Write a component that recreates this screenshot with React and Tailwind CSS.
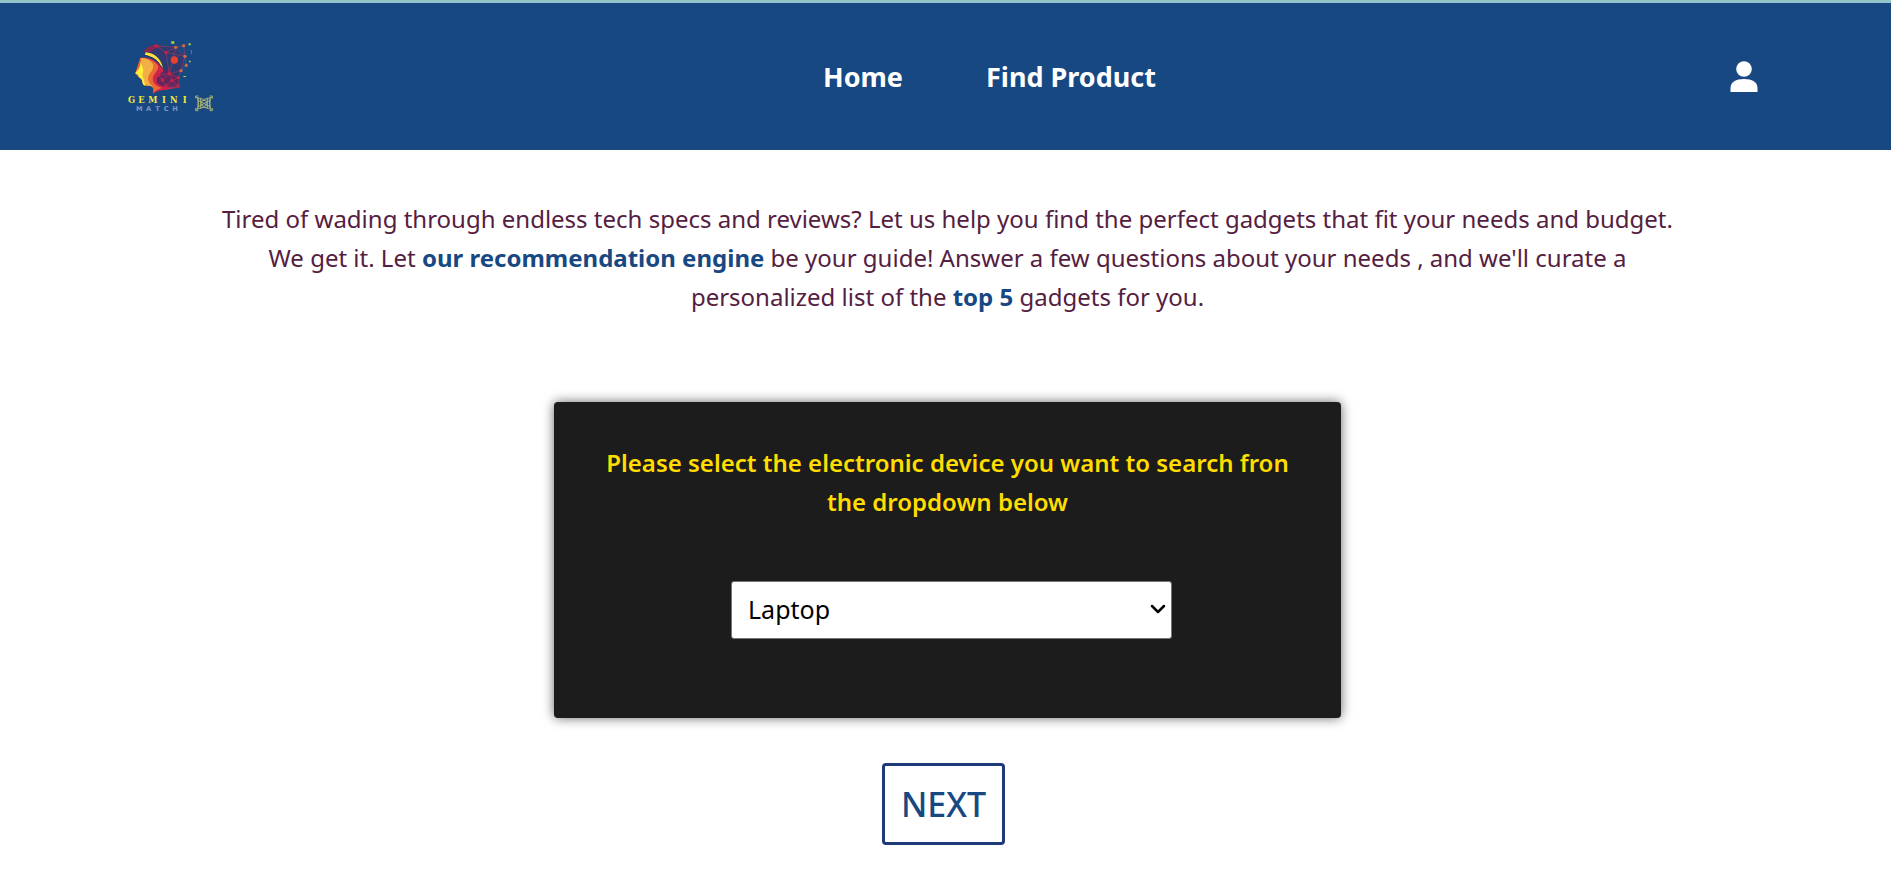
import React, { useState } from 'react';
import { ChevronDown } from 'lucide-react';

const links = [
  { label: 'Home', href: '#home' },
  { label: 'Find Product', href: '#find-product' },
];

const devices = ['Laptop', 'Phone', 'Tablet', 'Smart Watch'];

// Nodes and edges of the network at the back of the head
const nodes = [
  [138, 47], [168, 67], [197, 52], [221, 47], [225, 79], [229, 106], [213, 122],
  [178, 131], [157, 150], [205, 143], [186, 152], [205, 168], [168, 168], [145, 135],
];
const edges = [
  [0, 1], [1, 2], [2, 3], [2, 4], [3, 4], [4, 5], [5, 6], [6, 9], [7, 9], [7, 8],
  [7, 10], [9, 11], [10, 11], [10, 12], [8, 12], [8, 13], [7, 13], [1, 7], [2, 7],
  [4, 6], [6, 7], [0, 2], [1, 4], [9, 10], [11, 12],
];

function Logo() {
  return (
    <svg viewBox="51 30 264 219" className="h-[73px] w-[88px]" role="img" aria-label="Gemini Match">
      {/* Back of the head */}
      <path d="M138 47 L166 46 L197 52 L225 79 L213 122 L205 143 L207 170 L150 170 L137 145 L160 118 L140 85 L100 65Z" fill="#5c2257" opacity="0.35" />
      <path d="M100 65 C109 52 123 44 143 45 L156 50 C145 52 130 55 124 66Z" fill="#a01f4c" opacity="0.8" />
      <path d="M158 122 L178 120 L203 141 L207 170 L150 170 C137 160 138 140 158 122Z" fill="#7a1c55" opacity="0.7" />
      {/* Face, from the crimson band to the yellow profile */}
      <path d="M91 84 C104 80 130 86 146 101 C156 110 164 120 158 126 C144 134 137 146 142 158 C150 171 178 174 210 170 C188 180 150 176 128 191 C132 183 131 171 122 168 L103 166 L96 150 L76 130Z" fill="#d0244a" />
      <path d="M91 84 C108 82 130 88 142 104 C150 114 138 124 131 136 C124 150 130 166 156 174 C142 178 134 184 128 191 C132 183 131 171 122 168 L103 166 L96 150 L76 130Z" fill="#ea6a35" />
      <path d="M92 84 C112 83 130 95 130 108 C130 124 113 132 114 147 C115 159 122 162 130 172 L122 168 L103 166 C97 164 98 157 96 150 L76 130 C80 123 90 115 91 107 C92 98 95 95 92 84Z" fill="#f2b044" />
      <path d="M92 96 C98 112 103 122 97 132 C98 142 103 150 106 167 L103 166 C97 164 98 157 96 150 C96 144 89 144 87 142 C84 137 90 135 84 133 L76 130 C80 123 92 115 92 96Z" fill="#ffee3a" />
      <path d="M103 72 C128 76 145 90 156 108" fill="none" stroke="#1b2f64" strokeWidth="9" />
      <path d="M107 67 C131 69 152 84 159 113 L151 104 C143 88 124 78 104 74Z" fill="#ffe23a" />
      <g stroke="#b94358" strokeWidth="2" opacity="0.7">
        {edges.map(([a, b]) => (
          <line key={`${a}-${b}`} x1={nodes[a][0]} y1={nodes[a][1]} x2={nodes[b][0]} y2={nodes[b][1]} />
        ))}
      </g>
      {nodes.map(([x, y], i) => (
        <circle key={i} cx={x} cy={y} r="5" fill={i > 1 && i < 7 ? '#d9683f' : '#cf1f45'} />
      ))}
      <circle cx="193" cy="90" r="11" fill="#e8412f" />
      <path d="M184 34h9v7h-9z M236 40h6v6h-6z M237 92h5v5h-5z M220 138h8v3h-8z" fill="#b5d839" />
      <path d="M244 60v12" stroke="#5f7f7a" strokeWidth="3" />
      <text x="54 85 115 156 180 218" y="219" fill="#f1ea3c" className="font-['DejaVu_Serif'] text-[25px] font-bold" aria-hidden="true">GEMINI</text>
      <text x="78 108 136 161 187" y="243" fill="#8095c4" className="font-['DejaVu_Sans'] text-[20px] font-bold" aria-hidden="true">MATCH</text>
      <g fill="none" stroke="#a5b178" strokeWidth="3">
        <path d="M257 205 V198 H265 M299 198 H307 V206 M257 234 V242 H265 M299 242 H307 V234" />
        <path d="M260 201 Q281 215 304 201 Q292 220 304 239 Q282 225 260 239 Q272 220 260 201Z" />
        <path d="M263 210 L302 231 M302 210 L263 231 M272 203 V237 M292 203 V237 M264 204 V236 M300 204 V236" />
        <circle cx="282" cy="220" r="9" />
      </g>
    </svg>
  );
}

function UserIcon() {
  return (
    <svg viewBox="0 0 28 31" className="h-[31px] w-7" fill="currentColor" aria-hidden="true">
      <circle cx="14" cy="8" r="7.8" />
      <path d="M0.5 31 V27 C0.5 21 6 18 14 18 C22 18 27.5 21 27.5 27 V31Z" />
    </svg>
  );
}

function Header() {
  return (
    <header className="flex h-[150px] items-center justify-between border-t-3 border-[#93c6c9] bg-[#184882] pr-[133px] pl-[127px] text-white">
      <a href="#home" className="w-[122px]">
        <Logo />
      </a>
      <nav className="flex gap-[83px] text-[27px] leading-10 font-bold">
        {links.map((link) => (
          <a key={link.label} href={link.href}>{link.label}</a>
        ))}
      </nav>
      <button type="button" aria-label="Account">
        <UserIcon />
      </button>
    </header>
  );
}

export default function App() {
  const [device, setDevice] = useState('Laptop');

  return (
    <div className="min-h-screen bg-white font-['Noto_Sans',sans-serif]">
      <Header />
      <main className="flex flex-col items-center pt-[49px] pr-10 pb-7 pl-11">
        <p className="max-w-[1600px] text-center text-[24px] leading-[39px] text-[#55203f]">
          Tired of wading through endless tech specs and reviews? Let us help you find the perfect gadgets that fit your needs and budget.
          <br />
          We get it. Let <strong className="text-[#184882]">our recommendation engine</strong> be your guide! Answer a few questions about your needs , and we'll curate a
          <br />
          personalized list of the <strong className="text-[#184882]">top 5</strong> gadgets for you.
        </p>

        <section className="mt-[86px] flex w-full max-w-[787px] flex-col items-center rounded bg-[#1c1c1c] px-10 pt-[41px] pb-[79px] shadow-[0_0_12px_rgba(0,0,0,0.6)]">
          <label htmlFor="device" className="text-center text-[24px] leading-[39px] font-semibold text-[#ffdd00]">
            Please select the electronic device you want to search fron
            <br />
            the dropdown below
          </label>
          <div className="relative mt-[60px] ml-2 w-full max-w-[441px]">
            <select
              id="device"
              value={device}
              onChange={(e) => setDevice(e.target.value)}
              className="block h-[58px] w-full appearance-none rounded-[3px] border border-[#767676] bg-white px-4 text-[25px] text-black"
            >
              {devices.map((name) => (
                <option key={name}>{name}</option>
              ))}
            </select>
            <ChevronDown className="pointer-events-none absolute top-4 right-0.5 size-6 text-black" strokeWidth={2.5} />
          </div>
        </section>

        <button
          type="button"
          className="mt-[45px] mr-2 h-[82px] rounded border-3 border-[#1e3a7b] px-4 text-[34px] font-medium text-[#184882]"
        >
          NEXT
        </button>
      </main>
    </div>
  );
}
